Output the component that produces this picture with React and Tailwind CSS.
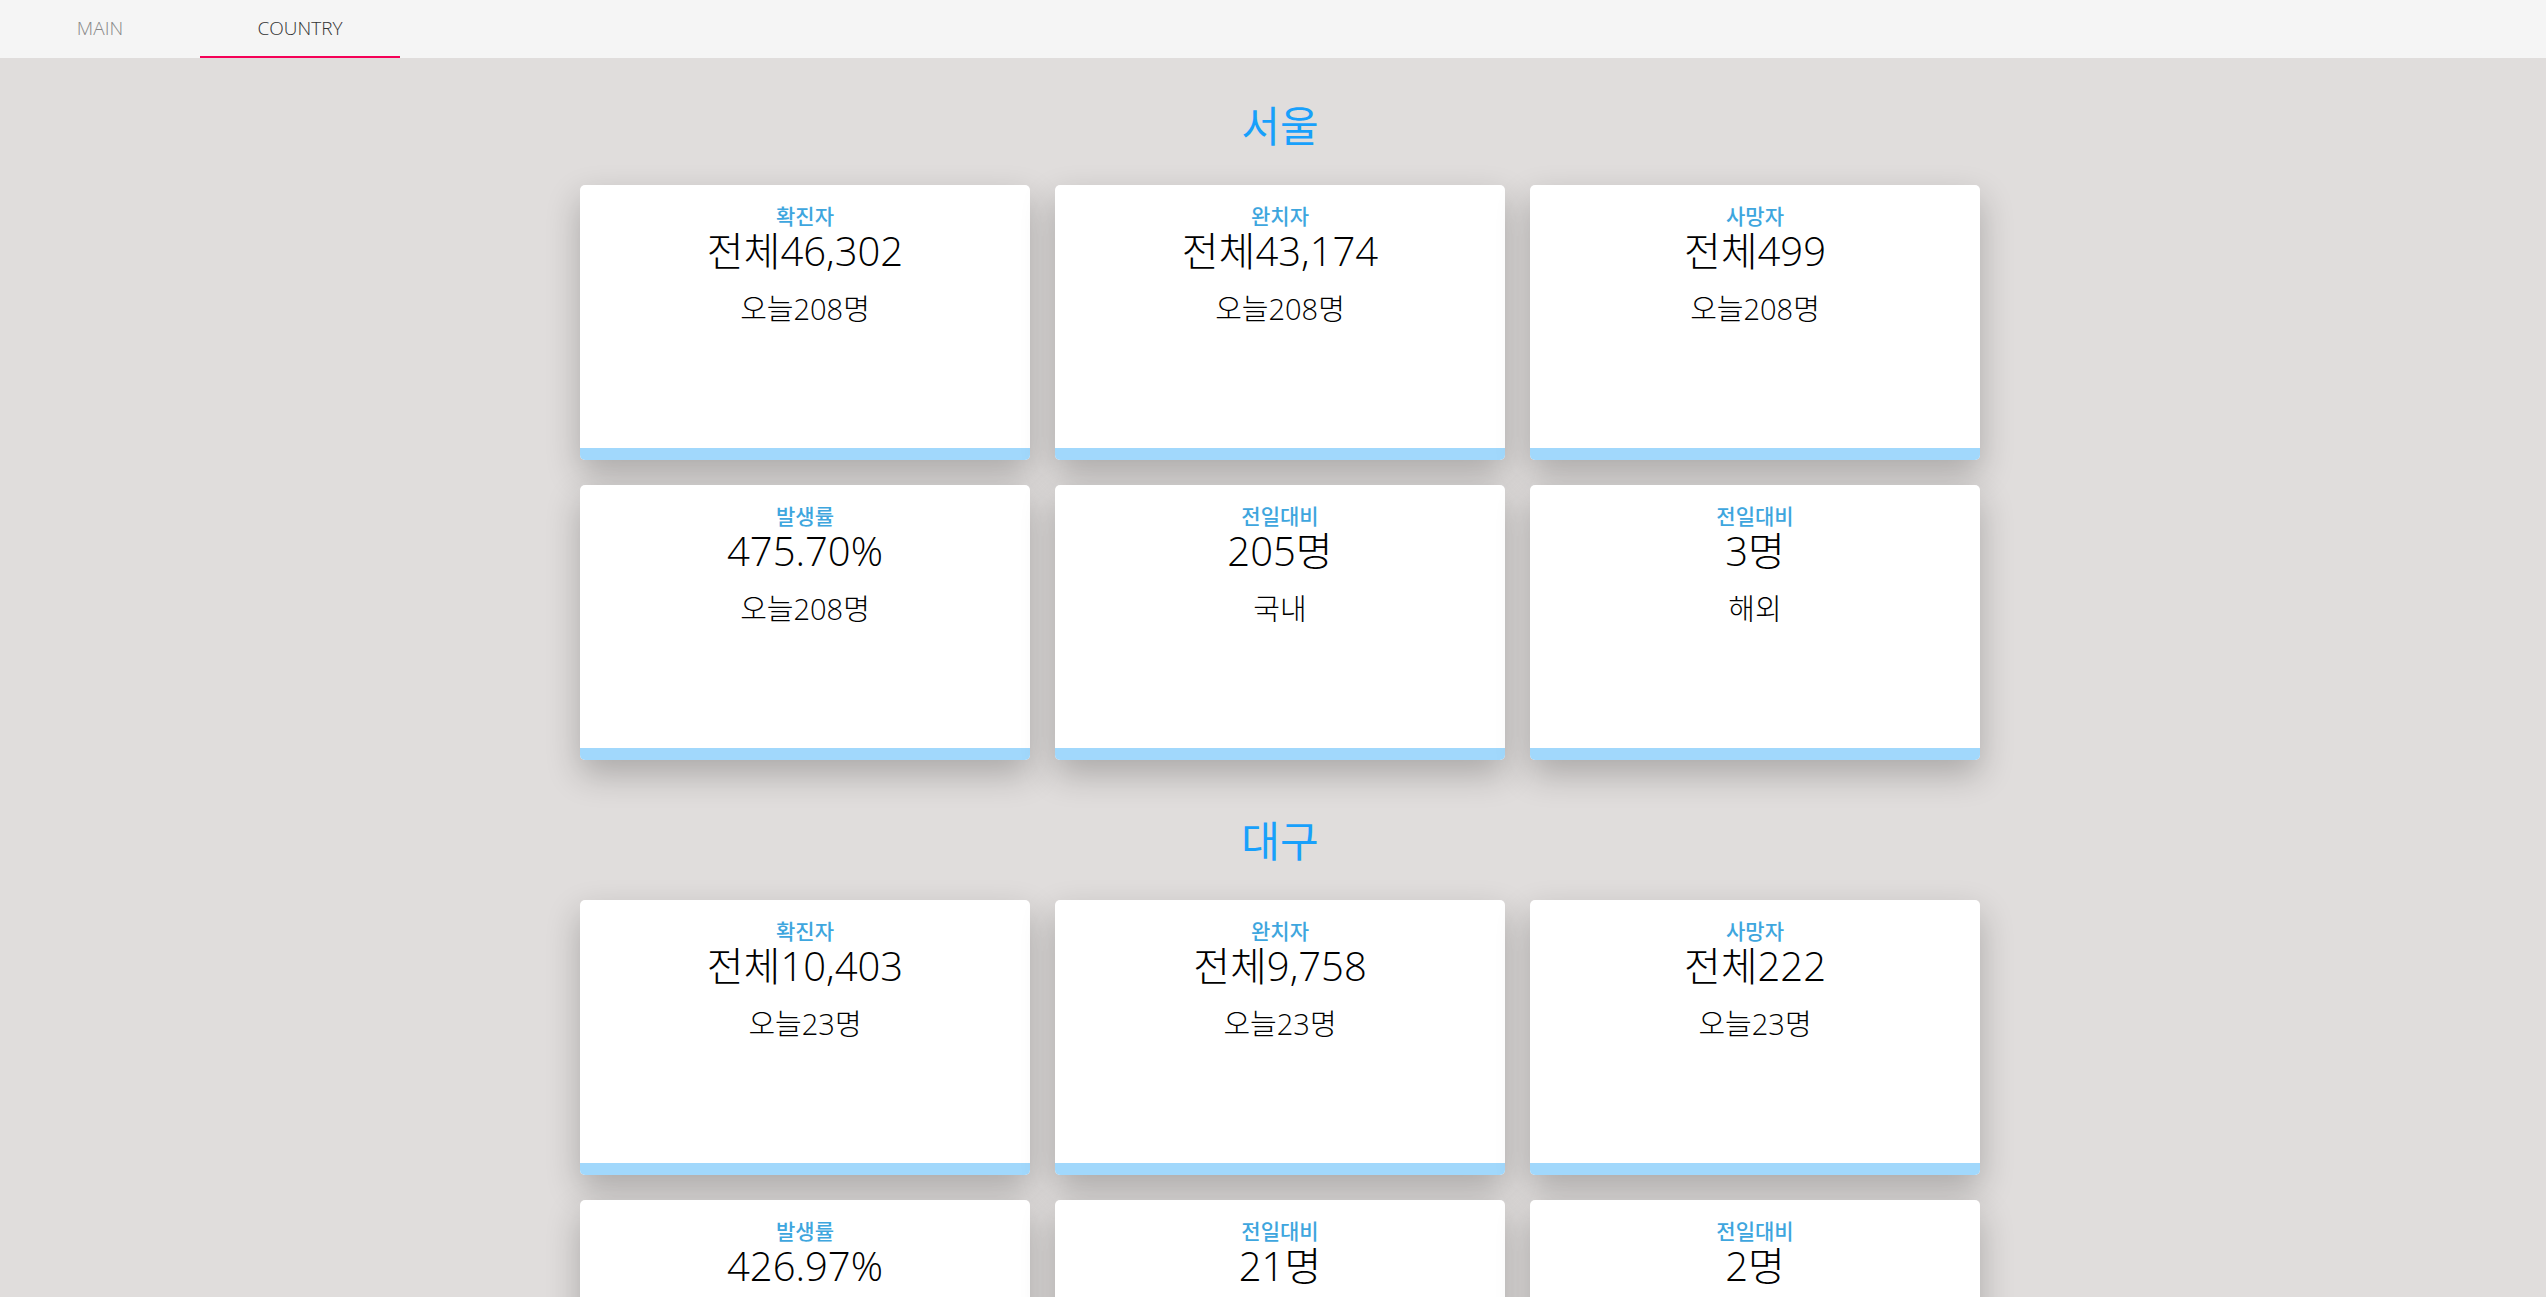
import React, { useState } from 'react';

const regions = [
  {
    name: '서울',
    stats: [
      { label: '확진자', main: '전체46,302', sub: '오늘208명' },
      { label: '완치자', main: '전체43,174', sub: '오늘208명' },
      { label: '사망자', main: '전체499', sub: '오늘208명' },
      { label: '발생률', main: '475.70%', sub: '오늘208명' },
      { label: '전일대비', main: '205명', sub: '국내' },
      { label: '전일대비', main: '3명', sub: '해외' },
    ],
  },
  {
    name: '대구',
    stats: [
      { label: '확진자', main: '전체10,403', sub: '오늘23명' },
      { label: '완치자', main: '전체9,758', sub: '오늘23명' },
      { label: '사망자', main: '전체222', sub: '오늘23명' },
      { label: '발생률', main: '426.97%', sub: '오늘23명' },
      { label: '전일대비', main: '21명', sub: '국내' },
      { label: '전일대비', main: '2명', sub: '해외' },
    ],
  },
];

function StatCard({ label, main, sub }) {
  return (
    <div className="h-[275px] bg-white rounded-[5px] overflow-hidden flex flex-col shadow-[0_14px_34px_rgba(0,0,0,0.24)]">
      <div className="flex-1 flex flex-col items-center pt-[18px]">
        <div className="text-[21px] leading-[24px] font-medium text-[#3ea6de]">{label}</div>
        <div className="text-[40px] leading-[48px] font-light text-black font-['Open_Sans','Noto_Sans_CJK_KR',sans-serif]">
          {main}
        </div>
        <div className="mt-[14px] text-[29px] leading-[40px] font-light text-black font-['Open_Sans','Noto_Sans_CJK_KR',sans-serif]">
          {sub}
        </div>
      </div>
      {/* bottom accent */}
      <div className="h-[12px] bg-[#a1d8fc]"></div>
    </div>
  );
}

export default function App() {
  const [tab, setTab] = useState('country');

  return (
    <div className="min-h-screen bg-[#e0dddc] font-['Noto_Sans_CJK_KR','Open_Sans',sans-serif]">
      <header className="h-[58px] bg-[#f5f5f5] flex">
        {['main', 'country'].map((t) => {
          const active = tab === t;
          return (
            <button
              key={t}
              type="button"
              onClick={() => setTab(t)}
              className={`relative w-[200px] h-full flex items-center justify-center pb-[1px] uppercase text-[19px] font-light font-['Open_Sans',sans-serif] cursor-pointer ${active ? 'text-[#333]' : 'text-[#888]'}`}
            >
              {t}
              {active && <span className="absolute left-0 right-0 bottom-0 h-[2px] bg-[#f50057]"></span>}
            </button>
          );
        })}
      </header>

      <main className="pl-[14px]">
        {regions.map((r) => (
          <section key={r.name} className="pt-[36px] pb-[13px]">
            <h2 className="text-center text-[42px] leading-[60px] text-[#18a0fb]">{r.name}</h2>
            <div className="mt-[31px] grid grid-cols-[repeat(3,450px)] gap-[25px] justify-center">
              {r.stats.map((s, i) => (
                <StatCard key={i} {...s} />
              ))}
            </div>
          </section>
        ))}
      </main>
    </div>
  );
}
